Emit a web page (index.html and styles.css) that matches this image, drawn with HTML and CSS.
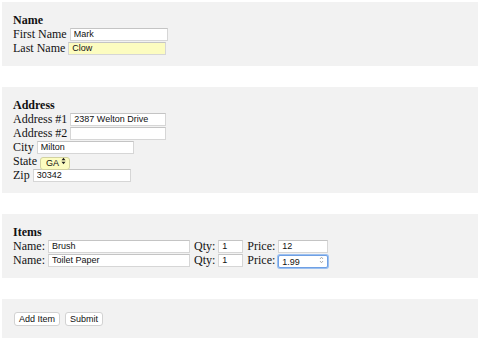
FILE: index.html
```html
<!DOCTYPE html>
<html>
<head>
<meta charset="utf-8">
<link rel="stylesheet" href="styles.css">
</head>
<body>
<form class="form">
  <fieldset class="panel">
    <div class="heading">Name</div>
    <div class="row"><label>First Name</label><input class="field w98" type="text" value="Mark"></div>
    <div class="row"><label>Last Name</label><input class="field w98 autofill" type="text" value="Clow"></div>
  </fieldset>

  <fieldset class="panel">
    <div class="heading">Address</div>
    <div class="row"><label>Address #1</label><input class="field w96" type="text" value="2387 Welton Drive"></div>
    <div class="row"><label>Address #2</label><input class="field w96" type="text" value=""></div>
    <div class="row"><label>City</label><input class="field w97" type="text" value="Milton"></div>
    <div class="row"><label>State</label><span class="select-wrap"><select class="select"><option>GA</option></select><svg class="updown" width="5" height="8" viewBox="0 0 5 8"><path d="M0.5 3.2 L2.5 0.8 L4.5 3.2 Z M0.5 4.8 L2.5 7.2 L4.5 4.8 Z" fill="#222"/></svg></span></div>
    <div class="row"><label>Zip</label><input class="field w98" type="text" value="30342"></div>
  </fieldset>

  <fieldset class="panel">
    <div class="heading">Items</div>
    <div class="row items"><label>Name:</label><input class="field name" type="text" value="Brush"><label class="lbl-gap">Qty:</label><input class="field qty" type="text" value="1"><label class="lbl-gap">Price:</label><input class="field price" type="text" value="12"></div>
    <div class="row items"><label>Name:</label><input class="field name" type="text" value="Toilet Paper"><label class="lbl-gap">Qty:</label><input class="field qty" type="text" value="1"><label class="lbl-gap">Price:</label><span class="num-wrap"><input class="field price focused" type="text" value="1.99"><svg class="spin" width="5" height="8" viewBox="0 0 5 8"><path d="M1 3 L2.5 1.2 L4 3 M1 5 L2.5 6.8 L4 5" fill="none" stroke="#999" stroke-width="0.8"/></svg></span></div>
  </fieldset>

  <fieldset class="panel buttons">
    <button type="button" class="btn">Add Item</button><button type="button" class="btn">Submit</button>
  </fieldset>
</form>
</body>
</html>
```
FILE: styles.css
```css
html, body {
  margin: 0;
  padding: 0;
  background: #ffffff;
}
body {
  margin: 2px;
  font-family: "Liberation Serif", "Times New Roman", serif;
  font-size: 12px;
  line-height: 14px;
  color: #111;
}
.form {
  display: flex;
  flex-direction: column;
  gap: 21px;
}
.panel {
  margin: 0;
  border: none;
  background: #f2f2f2;
  padding: 11px 11px 11px 11px;
  min-width: 0;
}
.heading {
  font-weight: bold;
  height: 14px;
}
.row {
  display: flex;
  align-items: center;
  height: 14px;
  white-space: nowrap;
}
.row label {
  margin-right: 3px;
}
.field {
  box-sizing: border-box;
  height: 13px;
  margin: 0;
  padding: 0 3px;
  border: 1px solid #d6d6d6;
  border-top-color: #c4c4c4;
  background: #ffffff;
  font-family: "Liberation Sans", Arial, sans-serif;
  font-size: 9px;
  color: #111;
  outline: none;
}
.w98 { width: 98px; }
.w96 { width: 96px; }
.w97 { width: 97px; }
.autofill {
  background: #fcfcc0;
}
.select-wrap {
  position: relative;
  display: inline-block;
  height: 13px;
}
.select {
  appearance: none;
  -webkit-appearance: none;
  box-sizing: border-box;
  width: 30px;
  height: 13px;
  margin: 0;
  padding: 0 0 0 5px;
  border: 1px solid #d2d2a0;
  border-radius: 3px;
  background: #fcfcc0;
  font-family: "Liberation Sans", Arial, sans-serif;
  font-size: 9px;
  line-height: 11px;
  color: #111;
}
.updown {
  position: absolute;
  right: 4px;
  top: 2.5px;
}
.items .lbl-gap {
  margin-left: 4px;
}
.name { width: 142px; }
.qty { width: 25px; }
.price { width: 50px; }
.num-wrap {
  position: relative;
  display: inline-block;
  height: 13px;
}
.focused {
  border: 1px solid #6fa0e4;
  border-radius: 2px;
  box-shadow: 0 0 0 1px #9cc0f0;
}
.spin {
  position: absolute;
  right: 4px;
  top: 2.5px;
}
.buttons {
  display: flex;
  align-items: center;
  gap: 5px;
  padding: 13px 11px 12px 12px;
}
.btn {
  box-sizing: border-box;
  height: 14px;
  margin: 0;
  padding: 0 4px;
  border: 1px solid #d2d2d2;
  border-radius: 3px;
  background: #ffffff;
  font-family: "Liberation Sans", Arial, sans-serif;
  font-size: 9px;
  line-height: 12px;
  color: #111;
}
```
